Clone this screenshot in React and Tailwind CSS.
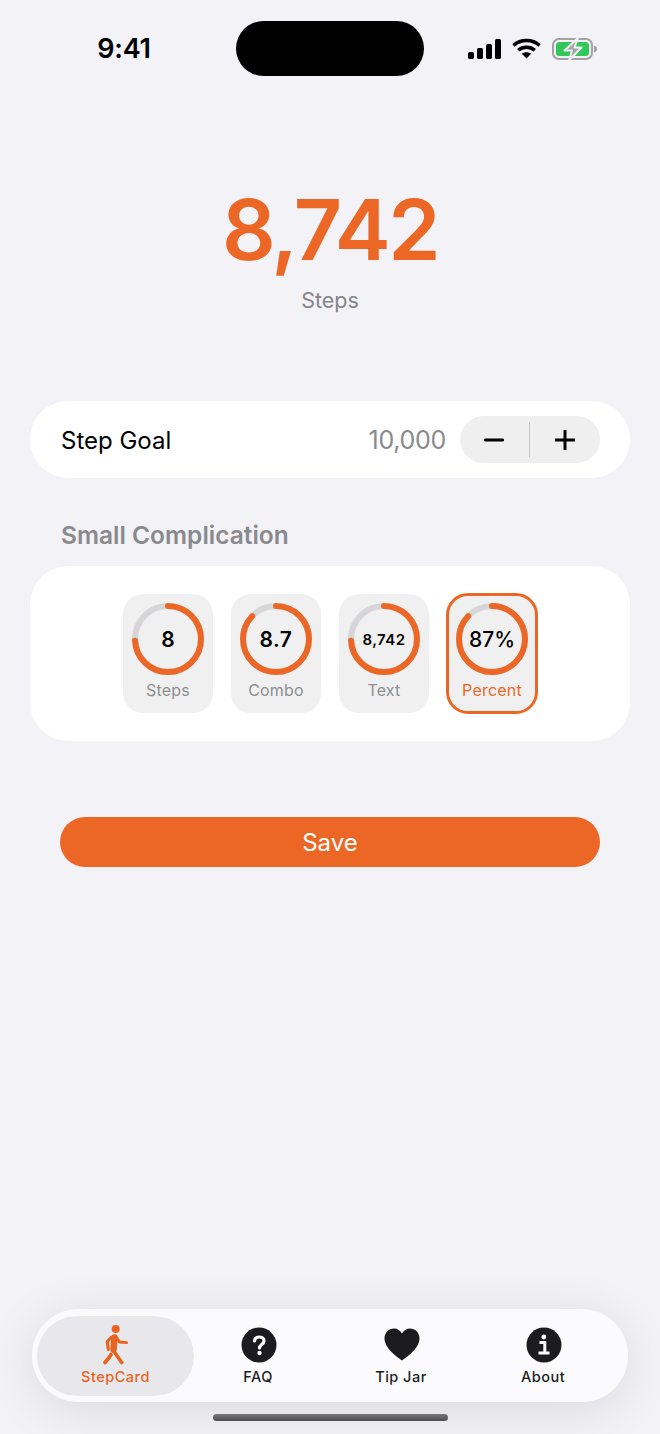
import React from "react";

const ORANGE = "#ec6726";

function Ring({ value, label, size, pct, selected, weight, track }) {
  const r = 33;
  const c = 2 * Math.PI * r;
  return (
    <div
      className={`w-[90px] h-[119px] rounded-[20px] bg-[#f0f0f0] flex flex-col items-center pt-[9px] ${
        selected ? "outline-[3px] outline-solid outline-[#ec6726] outline-offset-[-2px] rounded-[21px]" : ""
      }`}
    >
      <div className="relative w-[72px] h-[72px] flex items-center justify-center">
        <svg className="absolute inset-0" width="72" height="72" viewBox="0 0 72 72">
          <circle cx="36" cy="36" r={r} fill="none" stroke="#d6d6d8" strokeWidth="6" />
          <circle
            cx="36"
            cy="36"
            r={r}
            fill="none"
            stroke={ORANGE}
            strokeWidth="6"
            strokeLinecap="round"
            strokeDasharray={`${c * pct} ${c}`}
            transform="rotate(-90 36 36)"
          />
        </svg>
        <span
          className="text-black leading-none"
          style={{ fontSize: size, fontWeight: weight || 600, letterSpacing: track || 0 }}
        >
          {value}
        </span>
      </div>
      <span className={`mt-[5px] text-[16px] leading-[20px] tracking-[0.2px] ${selected ? "text-[#ec6726]" : "text-[#8e8e90]"}`}>
        {label}
      </span>
    </div>
  );
}

function Walk() {
  return (
    <svg width="28" height="40" viewBox="0 0 28 40" fill="none" stroke="#e8641f" strokeLinecap="round" strokeLinejoin="round">
      <circle cx="13.7" cy="4" r="4" fill="#e8641f" stroke="none" />
      <path d="M12.500 12.500L11.500 24.500" strokeWidth="6.500" />
      <path d="M11 25L19.700 37.500" strokeWidth="3.600" />
      <path d="M9 12.500L5.300 16.500L6.300 24.500" strokeWidth="3.200" />
      <path d="M15 13L17.500 17L24.700 17.700" strokeWidth="2.800" />
      <path d="M9 29.500L7.500 32L3 37.500" strokeWidth="3.600" />
    </svg>
  );
}

function Tab({ label, active, className, iconClass, children }) {
  return (
    <div className={`h-[80px] flex flex-col items-center pt-[9px] ${className}`}>
      <div className={`h-[40px] flex items-center justify-center ${iconClass || ""}`}>{children}</div>
      <span className={`mt-[3px] text-[14.5px] leading-[18px] font-medium tracking-[0.5px] ${active ? "text-[#e8641f]" : "text-[#1c1c1e]"}`}>
        {label}
      </span>
    </div>
  );
}

export default function App() {
  return (
    <div
      className="w-[660px] h-[1434px] bg-[#f2f2f7] flex flex-col overflow-hidden"
      style={{ fontFamily: "Inter, 'Noto Sans', sans-serif" }}
    >
      {/* status bar */}
      <div className="h-[76px] pt-[21px] flex items-start shrink-0">
        <div className="w-[236px] h-[55px] flex items-center justify-center pl-[12px]">
          <span className="text-[27px] font-semibold text-black leading-none tracking-[-0.2px]">9:41</span>
        </div>
        <div className="w-[188px] h-[55px] rounded-[28px] bg-black" />
        <div className="h-[55px] flex items-center pl-[44px]">
          <svg width="34" height="20" viewBox="0 0 34 20" fill="#000" className="mt-[1px]">
            <rect x="0" y="13" width="6" height="7" rx="1.6" />
            <rect x="9" y="9" width="6" height="11" rx="1.6" />
            <rect x="18" y="5" width="6" height="15" rx="1.6" />
            <rect x="27" y="0" width="6" height="20" rx="1.6" />
          </svg>
          <svg width="29" height="21" viewBox="0 0 29 21" className="ml-[10px]" fill="none" stroke="#000" strokeWidth="3.4">
            <path d="M1.5 7.5C8.5 .8 20.5 .8 27.5 7.5" />
            <path d="M6.2 12.2c4.5-4 12-4 16.6 0" />
            <path d="M14.5 20.5l-4.6-4.8c2.5-2 6.7-2 9.2 0z" fill="#000" stroke="none" />
          </svg>
          <svg width="46" height="24" viewBox="0 0 46 24" className="ml-[11px]">
            <rect x="1" y="2" width="39" height="20" rx="6" fill="none" stroke="#a2a2a4" strokeWidth="2" />
            <rect x="4" y="5" width="33" height="14" rx="3.5" fill="#32c759" />
            <path d="M42 8.5c2 .6 3 1.8 3 3.5s-1 2.900-3 3.500z" fill="#a2a2a4" />
            <path d="M26 1L12.500 13.500H20L17 23.500L29.500 10.500H22.500Z" fill="#a5a5a8" stroke="#f2f2f7" strokeWidth="2" strokeLinejoin="round" />
          </svg>
        </div>
      </div>

      {/* steps */}
      <div className="mt-[105px] flex flex-col items-center shrink-0">
        <div className="text-[84px] leading-[98px] font-[570] text-[#ec6726] tracking-[-2.5px]">8,742</div>
        <div className="mt-[8px] text-[21.5px] leading-[26px] text-[#85858b]">Steps</div>
      </div>

      {/* goal */}
      <div className="mt-[88px] mx-[30px] h-[77px] rounded-[38px] bg-white flex items-center pl-[31px] pr-[30px] shrink-0">
        <span className="text-[24px] text-black pt-[2px]">Step Goal</span>
        <span className="ml-auto text-[25px] text-[#8a8a8e] tracking-[-0.3px] pt-[2px]">10,000</span>
        <div className="ml-[14px] w-[140px] h-[47px] rounded-[24px] bg-[#efefef] flex items-center">
          <div className="flex-1 flex items-center justify-center">
            <svg width="20" height="4" viewBox="0 0 20 4"><rect width="20" height="3" y="0.5" rx="1.200" fill="#000" /></svg>
          </div>
          <div className="w-[1.5px] h-[35px] bg-[#c3c3c5]" />
          <div className="flex-1 flex items-center justify-center pr-[1px]">
            <svg width="20" height="20" viewBox="0 0 20 20"><path d="M10 0v20M0 10h20" stroke="#000" strokeWidth="3" strokeLinecap="round" /></svg>
          </div>
        </div>
      </div>

      <div className="mt-[41px] ml-[61px] text-[24.5px] leading-[32px] font-semibold text-[#8a8a8e] shrink-0">Small Complication</div>

      {/* complications */}
      <div className="mt-[15px] mx-[30px] h-[175px] rounded-[38px] bg-white flex justify-center pt-[28px] gap-[18px] shrink-0">
        <Ring value="8" label="Steps" size={21} pct={0.74} />
        <Ring value="8.7" label="Combo" size={21} pct={0.87} track="0.5px" />
        <Ring value="8,742" label="Text" size={15} pct={0.74} track="0.4px" />
        <Ring value="87%" label="Percent" size={21} pct={0.87} selected weight={500} />
      </div>

      <div className="mt-[76px] mx-[60px] h-[50px] rounded-[25px] bg-[#ec6726] flex items-center justify-center shrink-0">
        <span className="text-[24px] text-white pt-[2px]">Save</span>
      </div>

      {/* tab bar */}
      <div className="mt-auto mx-[32px] h-[93px] rounded-[46px] bg-[#fbfbfe] shadow-[0_8px_50px_rgba(0,0,0,0.1)] flex items-center pl-[5px] shrink-0">
        <Tab label="StepCard" active className="w-[157px] rounded-[40px] bg-[#e8e8ec]">
          <Walk />
        </Tab>
        <Tab label="FAQ" className="w-[128px]" iconClass="pl-[2px]">
          <svg width="36" height="36" viewBox="0 0 36 36">
            <circle cx="18" cy="18" r="17.500" fill="#1c1c1e" />
            <path d="M13.500 14c.3-2.700 2.200-4 4.700-4 2.700 0 4.800 1.600 4.800 4 0 3.600-4.500 3.500-4.500 7" fill="none" stroke="#fff" strokeWidth="3.200" strokeLinecap="round" />
            <circle cx="18.500" cy="26" r="2.200" fill="#fff" />
          </svg>
        </Tab>
        <Tab label="Tip Jar" className="w-[142px] ml-[8px]" iconClass="pl-[1px]">
          <svg width="36" height="33" viewBox="0 0 36 33">
            <path d="M18 32.500C15 30 0.500 21 0.500 10.500 0.500 4.500 4.800 0.500 10 0.500c3.500 0 6.500 2 8 5 1.500-3 4.500-5 8-5 5.200 0 9.500 4 9.500 10 0 10.500-14.500 19.500-17.500 22z" fill="#1c1c1e" />
          </svg>
        </Tab>
        <Tab label="About" className="w-[142px]" iconClass="pl-[2px]">
          <svg width="36" height="36" viewBox="0 0 36 36">
            <circle cx="18" cy="18" r="17.500" fill="#1c1c1e" />
            <circle cx="17.800" cy="10" r="2.400" fill="#fff" />
            <path d="M13.500 15.500h5.300v10M12.500 26h11" fill="none" stroke="#fff" strokeWidth="3" />
          </svg>
        </Tab>
      </div>

      <div className="mt-[12px] mb-[13px] mx-auto w-[235px] h-[7px] rounded-full bg-gradient-to-b from-[#77777a] to-[#4f4f52] shrink-0" />
    </div>
  );
}
